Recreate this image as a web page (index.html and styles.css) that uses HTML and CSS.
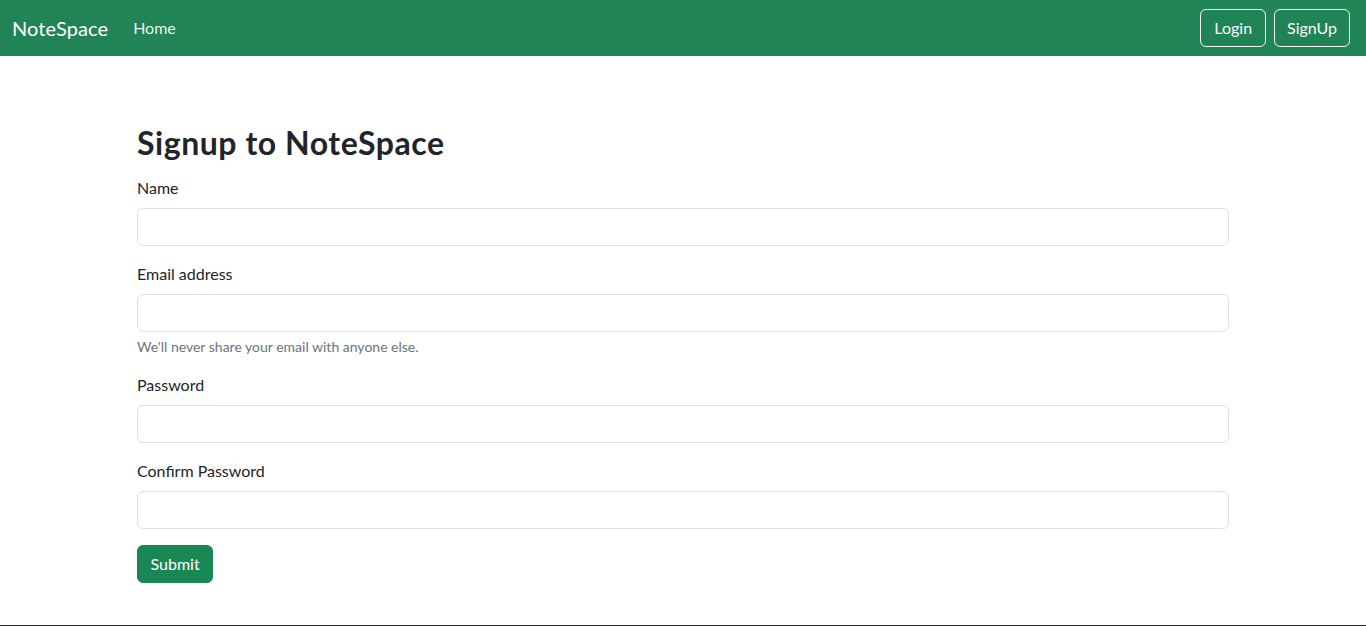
FILE: index.html
```html
<!DOCTYPE html>
<html lang="en">
<head>
<meta charset="utf-8">
<title>NoteSpace - Signup</title>
<link rel="stylesheet" href="styles.css">
</head>
<body>
<nav class="navbar">
  <div class="nav-left">
    <a class="brand" href="#">NoteSpace</a>
    <a class="nav-link" href="#">Home</a>
  </div>
  <div class="nav-right">
    <a class="btn-outline" href="#">Login</a>
    <a class="btn-outline" href="#">SignUp</a>
  </div>
</nav>
<main class="container">
  <h2 class="title">Signup to NoteSpace</h2>
  <form class="form">
    <div class="field">
      <label class="label" for="name">Name</label>
      <input class="input" id="name" type="text">
    </div>
    <div class="field">
      <label class="label" for="email">Email address</label>
      <input class="input" id="email" type="email">
      <div class="form-text">We'll never share your email with anyone else.</div>
    </div>
    <div class="field">
      <label class="label" for="password">Password</label>
      <input class="input" id="password" type="password">
    </div>
    <div class="field">
      <label class="label" for="cpassword">Confirm Password</label>
      <input class="input" id="cpassword" type="password">
    </div>
    <button class="btn-submit" type="button">Submit</button>
  </form>
</main>
<div class="bottom-line"></div>
</body>
</html>
```
FILE: styles.css
```css
* { box-sizing: border-box; }
html, body { margin: 0; padding: 0; }
body {
  font-family: Lato, "Noto Sans", "Liberation Sans", sans-serif;
  font-size: 16px;
  line-height: 1.5;
  color: #212529;
  background: #fff;
  min-height: 100vh;
  display: flex;
  flex-direction: column;
}
a { text-decoration: none; }
.navbar {
  height: 56px;
  background: #218457;
  display: flex;
  align-items: center;
  justify-content: space-between;
  padding: 0 12px;
}
.nav-left { display: flex; align-items: center; }
.brand {
  color: #fff;
  font-size: 20px;
  line-height: 30px;
  margin-right: 17px;
  letter-spacing: 0.1px;
}
.nav-link {
  color: rgba(255,255,255,0.92);
  font-size: 16px;
  padding: 8px 8px;
}
.nav-right { display: flex; align-items: center; }
.btn-outline {
  color: #f8f9fa;
  border: 1px solid #f8f9fa;
  border-radius: 6px;
  padding: 6px 13px;
  font-size: 16px;
  line-height: 24px;
  margin: 0 4px;
}
.btn-outline + .btn-outline { padding: 6px 12px; }
.container {
  width: 1092px;
  margin: 0 auto;
  padding-top: 68px;
}
.title {
  font-size: 32px;
  font-weight: 700;
  line-height: 38px;
  letter-spacing: 0.55px;
  margin: 0 0 14px;
}
.form { margin: 0; }
.field { margin-bottom: 16px; }
.label {
  display: block;
  font-size: 16px;
  line-height: 24px;
  margin-bottom: 8px;
}
.input {
  display: block;
  width: 100%;
  height: 38px;
  border: 1px solid #dee2e6;
  border-radius: 6px;
  padding: 6px 12px;
  font: inherit;
  background: #fff;
}
.form-text {
  margin-top: 4px;
  font-size: 14px;
  line-height: 21px;
  color: #6c757d;
}
.btn-submit {
  background: #198754;
  color: #fff;
  border: 1px solid #198754;
  border-radius: 6px;
  padding: 6px 12.5px;
  height: 38px;
  font: inherit;
  font-size: 16px;
  line-height: 24px;
}
.bottom-line {
  margin-top: auto;
  height: 1px;
  background: #17322b;
}
```
